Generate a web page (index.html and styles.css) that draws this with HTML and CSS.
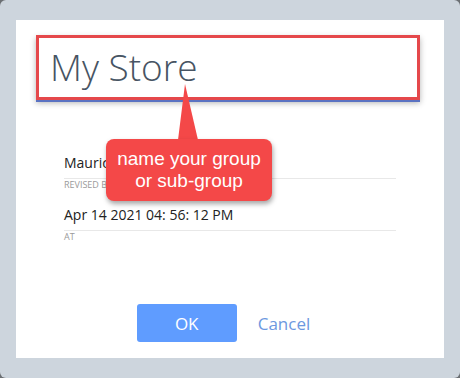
FILE: index.html
```html
<!DOCTYPE html>
<html lang="en">
<head>
  <meta charset="UTF-8">
  <meta name="viewport" content="width=device-width, initial-scale=1.0">
  <title>Group name</title>
  <link rel="stylesheet" href="styles.css">
</head>
<body>
  <div class="dialog">
    <div class="title-box">
      <span class="title">My Store</span>
    </div>

    <div class="fields">
      <div class="field">
        <div class="value">Mauricio</div>
        <div class="label">REVISED BY</div>
      </div>
      <div class="field">
        <div class="value">Apr 14 2021 04: 56: 12 PM</div>
        <div class="label">AT</div>
      </div>
    </div>

    <div class="actions">
      <button class="btn-ok">OK</button>
      <button class="btn-cancel">Cancel</button>
    </div>
  </div>

  <!-- annotation callout -->
  <div class="callout">
    <svg class="callout-pointer" width="24" height="58" viewBox="0 0 24 58">
      <polygon points="8,0 1,56 21,56" fill="#f44848"/>
    </svg>
    <div class="callout-body">name your group<br>or sub-group</div>
  </div>
</body>
</html>
```

FILE: styles.css
```css
html {
  background: #6b6f73;
}
body {
  margin: 0;
  width: 460px;
  height: 378px;
  background-color: #cdd5dd;
  border-radius: 6px;
  font-family: "Open Sans", sans-serif;
  overflow: hidden;
  position: relative;
}
.dialog {
  position: absolute;
  left: 16px;
  top: 20px;
  width: 428px;
  height: 338px;
  background: #fff;
  box-sizing: border-box;
  padding: 15px 24px 0 20px;
}
.title-box {
  height: 65px;
  box-sizing: border-box;
  border: 3px solid #e5484b;
  box-shadow: 0 2px 0 #5a72c2, 0 3px 6px rgba(0, 0, 0, 0.3);
  padding-left: 11px;
}
.title {
  font-size: 37px;
  font-weight: 300;
  line-height: 57px;
  color: #475463;
}
.fields {
  margin: 53px 24px 0 28px;
}
.field {
  margin-bottom: 14px;
}
.value {
  font-size: 14px;
  line-height: 20px;
  color: #222;
  padding-bottom: 5px;
  border-bottom: 1px solid #e8e8e8;
}
.label {
  font-size: 9px;
  line-height: 12px;
  color: #9a9a9a;
}
.actions {
  margin-top: 61px;
  display: flex;
  justify-content: center;
  padding-right: 9px;
}
.btn-ok {
  width: 100px;
  height: 38px;
  border: none;
  border-radius: 3px;
  background: #5f9cff;
  color: #fff;
  font-family: "Open Sans", sans-serif;
  font-size: 17px;
  cursor: pointer;
}
.btn-cancel {
  border: none;
  background: none;
  color: #6d98e0;
  font-family: "Open Sans", sans-serif;
  font-size: 17px;
  padding: 0 0 0 21px;
  height: 38px;
  cursor: pointer;
}
.callout {
  position: absolute;
  left: 106px;
  top: 84px;
  width: 166px;
}
.callout-pointer {
  position: absolute;
  left: 71px;
  top: 0;
}
.callout-body {
  margin-top: 55px;
  height: 62px;
  border-radius: 8px;
  background: #f44848;
  box-shadow: 1px 3px 5px rgba(0, 0, 0, 0.35);
  color: #fff;
  font-family: "Liberation Sans", Arial, sans-serif;
  font-size: 19px;
  line-height: 22px;
  text-align: center;
  box-sizing: border-box;
  padding-top: 9px;
  position: relative;
}
```
